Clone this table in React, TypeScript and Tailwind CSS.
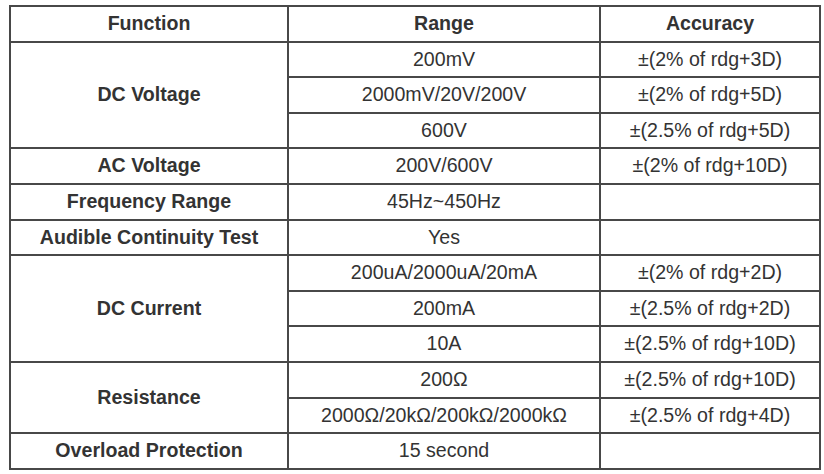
const cell = 'border-2 border-[#484848] text-center align-middle px-1';

type Row = { fn?: string; span?: number; range: string; acc: string };

const rows: Row[] = [
  { fn: 'DC Voltage', span: 3, range: '200mV', acc: '±(2% of rdg+3D)' },
  { range: '2000mV/20V/200V', acc: '±(2% of rdg+5D)' },
  { range: '600V', acc: '±(2.5% of rdg+5D)' },
  { fn: 'AC Voltage', span: 1, range: '200V/600V', acc: '±(2% of rdg+10D)' },
  { fn: 'Frequency Range', span: 1, range: '45Hz~450Hz', acc: '' },
  { fn: 'Audible Continuity Test', span: 1, range: 'Yes', acc: '' },
  { fn: 'DC Current', span: 3, range: '200uA/2000uA/20mA', acc: '±(2% of rdg+2D)' },
  { range: '200mA', acc: '±(2.5% of rdg+2D)' },
  { range: '10A', acc: '±(2.5% of rdg+10D)' },
  { fn: 'Resistance', span: 2, range: '200Ω', acc: '±(2.5% of rdg+10D)' },
  { range: '2000Ω/20kΩ/200kΩ/2000kΩ', acc: '±(2.5% of rdg+4D)' },
  { fn: 'Overload Protection', span: 1, range: '15 second', acc: '' },
];

export default function App() {
  return (
    <div className="w-[824px] h-[474px] bg-white pt-[5px] pl-[9px]" style={{ fontFamily: '"Liberation Sans", Arial, sans-serif' }}>
      <table className="border-collapse text-[19.6px] text-[#333] table-fixed w-[810px]">
        <colgroup>
          <col className="w-[278px]" />
          <col className="w-[312px]" />
          <col className="w-[220px]" />
        </colgroup>
        <thead>
          <tr className="h-[35.6px]">
            <th className={`${cell} font-bold`}>Function</th>
            <th className={`${cell} font-bold`}>Range</th>
            <th className={`${cell} font-bold`}>Accuracy</th>
          </tr>
        </thead>
        <tbody>
          {rows.map((r, i) => (
            <tr key={i} className="h-[35.6px]">
              {r.fn && (
                <td rowSpan={r.span} className={`${cell} font-bold`}>
                  {r.fn}
                </td>
              )}
              <td className={cell}>{r.range}</td>
              <td className={cell}>{r.acc}</td>
            </tr>
          ))}
        </tbody>
      </table>
    </div>
  );
}
